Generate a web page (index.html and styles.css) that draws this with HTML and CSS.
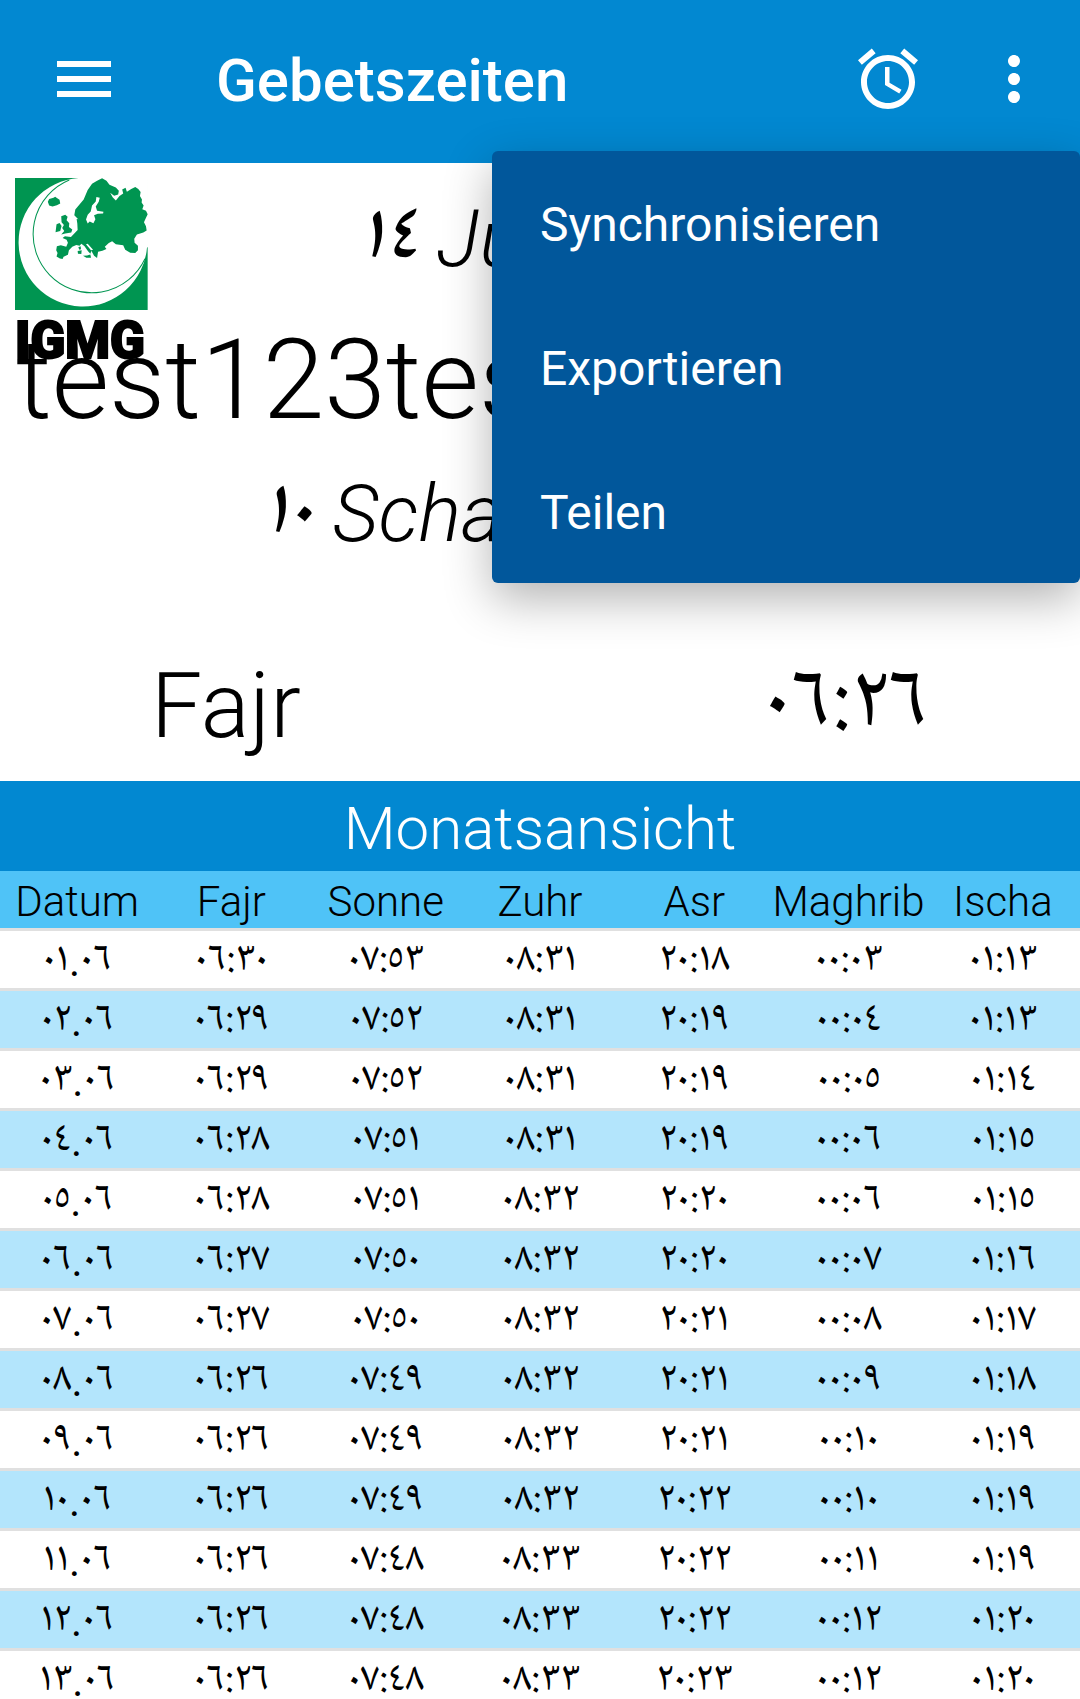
FILE: index.html
```html
<!DOCTYPE html>
<html lang="de">
<head>
<meta charset="utf-8">
<meta name="viewport" content="width=device-width, initial-scale=1">
<title>Gebetszeiten</title>
<link rel="stylesheet" href="styles.css">
</head>
<body>
<div class="app">
  <header class="toolbar">
    <button class="icon-button" type="button" aria-label="Navigation">
      <svg viewBox="0 0 24 24"><path d="M3 18h18v-2H3v2zm0-5h18v-2H3v2zm0-7v2h18V6H3z"/></svg>
    </button>
    <h1 class="toolbar-title">Gebetszeiten</h1>
    <button class="icon-button" type="button" aria-label="Wecker">
      <svg viewBox="0 0 24 24"><path d="M22 5.72l-4.6-3.86-1.29 1.53 4.6 3.86L22 5.72zM7.88 3.39L6.6 1.86 2 5.71l1.29 1.53 4.59-3.85zM12.5 8H11v6l4.75 2.85.75-1.23-4-2.37V8zM12 4c-4.97 0-9 4.03-9 9s4.02 9 9 9 9-4.03 9-9-4.03-9-9-9zm0 16c-3.87 0-7-3.13-7-7s3.13-7 7-7 7 3.13 7 7-3.13 7-7 7z"/></svg>
    </button>
    <button class="icon-button overflow" type="button" aria-label="Mehr" aria-expanded="true">
      <svg viewBox="0 0 24 24"><path d="M12 8c1.100 0 2-.9 2-2s-.9-2-2-2-2 .9-2 2 .9 2 2 2zm0 2c-1.100 0-2 .9-2 2s.9 2 2 2 2-.9 2-2-.9-2-2-2zm0 6c-1.100 0-2 .9-2 2s.9 2 2 2 2-.9 2-2-.9-2-2-2z"/></svg>
    </button>
    <div class="menu" role="menu">
      <button class="menu-item" type="button" role="menuitem">Synchronisieren</button>
      <button class="menu-item" type="button" role="menuitem">Exportieren</button>
      <button class="menu-item" type="button" role="menuitem">Teilen</button>
    </div>
  </header>

  <main class="content">
    <section class="today">
      <div class="logo">
        <svg class="logo-mark" viewBox="45 54 396 394" aria-hidden="true">
          <path class="green" d="M45 54H441V448H45z"/>
          <path class="white" d="M235 54A192 192 0 1 0 439 262L442 260V53z"/>
          <path class="ring" d="M207 60A175 175 0 1 0 433 295"/>
          <path class="green" d="M222 165L225 148L250 118L262 90L275 71L290 62L305 55L318 62L327 74L346 82L355 92L353 103L341 107L329 98L337 112L346 121L357 108L368 100L365 88L375 83L379 95L392 87L404 81L413 87L420 96L418 108L424 118L423 127L429 136L425 147L436 152L441 162L435 175L430 186L436 198L438 211L428 217L409 223L401 235L402 247L412 256L412 270L404 278L389 277L374 268L368 255L346 252L335 243L325 248L313 259L318 266L306 271L293 274L290 293L281 286L272 270L278 268L262 250L257 252L273 271L270 280L263 273L252 257L243 250L238 256L228 254L216 259L206 270L203 283L190 289L187 296L179 294L169 288L172 278L168 270L170 258L182 255L198 259L203 247L199 238L187 233L194 228L212 230L222 220L232 209L231 190L229 176L242 178L244 190L254 181L263 187L258 176L261 164L271 154L275 136L286 124L288 111L298 112L295 124L286 139L290 152L309 156L308 160L290 160L280 164L285 177L278 189L269 187L270 196L259 191L252 195L242 193L242 179L233 176z"/>
          <path class="white" d="M288 111L298 113L295 125L286 139L290 152L309 155L308 160L292 161L281 165L285 177L279 189L268 184L262 190L257 178L262 164L271 154L275 136L286 124z"/>
          <path class="green" d="M143 125L147 117L160 113L165 110L170 114L178 119L180 130L170 135L157 139L147 136"/>
          <path class="green" d="M183 168L195 164L202 170L199 180L207 189L206 200L216 208L213 217L195 220L183 223L192 212L186 203L191 194L184 186z"/>
          <path class="green" d="M169 192L178 188L184 197L180 212L166 216z"/>
          <path class="green" d="M234 261L241 258L242 267L237 268zM232 272L244 270L243 281L233 280zM248 286L260 285L270 282L272 292L258 292z"/>
        </svg>
        <span class="logo-name">IGMG</span>
      </div>
      <p class="date"><span class="num">١٤</span> Juni <span class="num">٢٠١٩</span></p>
      <p class="place">test123test123test123</p>
      <p class="date hijri"><span class="num">١٠</span> Schawwal <span class="num">١٤٤٠</span></p>
      <div class="next">
        <span class="next-name">Fajr</span>
        <time class="next-time">٠٦:٢٦</time>
      </div>
    </section>

    <h2 class="month-title">Monatsansicht</h2>
    <table class="times">
      <thead>
        <tr><th>Datum</th><th>Fajr</th><th>Sonne</th><th>Zuhr</th><th>Asr</th><th>Maghrib</th><th>Ischa</th></tr>
      </thead>
      <tbody>
        <tr><td>٠١<span class="dot">.</span>٠٦</td><td>٠٦:٣٠</td><td>٠٧:٥٣</td><td>٠٨:٣١</td><td>٢٠:١٨</td><td>٠٠:٠٣</td><td>٠١:١٣</td></tr>
        <tr><td>٠٢<span class="dot">.</span>٠٦</td><td>٠٦:٢٩</td><td>٠٧:٥٢</td><td>٠٨:٣١</td><td>٢٠:١٩</td><td>٠٠:٠٤</td><td>٠١:١٣</td></tr>
        <tr><td>٠٣<span class="dot">.</span>٠٦</td><td>٠٦:٢٩</td><td>٠٧:٥٢</td><td>٠٨:٣١</td><td>٢٠:١٩</td><td>٠٠:٠٥</td><td>٠١:١٤</td></tr>
        <tr><td>٠٤<span class="dot">.</span>٠٦</td><td>٠٦:٢٨</td><td>٠٧:٥١</td><td>٠٨:٣١</td><td>٢٠:١٩</td><td>٠٠:٠٦</td><td>٠١:١٥</td></tr>
        <tr><td>٠٥<span class="dot">.</span>٠٦</td><td>٠٦:٢٨</td><td>٠٧:٥١</td><td>٠٨:٣٢</td><td>٢٠:٢٠</td><td>٠٠:٠٦</td><td>٠١:١٥</td></tr>
        <tr><td>٠٦<span class="dot">.</span>٠٦</td><td>٠٦:٢٧</td><td>٠٧:٥٠</td><td>٠٨:٣٢</td><td>٢٠:٢٠</td><td>٠٠:٠٧</td><td>٠١:١٦</td></tr>
        <tr><td>٠٧<span class="dot">.</span>٠٦</td><td>٠٦:٢٧</td><td>٠٧:٥٠</td><td>٠٨:٣٢</td><td>٢٠:٢١</td><td>٠٠:٠٨</td><td>٠١:١٧</td></tr>
        <tr><td>٠٨<span class="dot">.</span>٠٦</td><td>٠٦:٢٦</td><td>٠٧:٤٩</td><td>٠٨:٣٢</td><td>٢٠:٢١</td><td>٠٠:٠٩</td><td>٠١:١٨</td></tr>
        <tr><td>٠٩<span class="dot">.</span>٠٦</td><td>٠٦:٢٦</td><td>٠٧:٤٩</td><td>٠٨:٣٢</td><td>٢٠:٢١</td><td>٠٠:١٠</td><td>٠١:١٩</td></tr>
        <tr><td>١٠<span class="dot">.</span>٠٦</td><td>٠٦:٢٦</td><td>٠٧:٤٩</td><td>٠٨:٣٢</td><td>٢٠:٢٢</td><td>٠٠:١٠</td><td>٠١:١٩</td></tr>
        <tr><td>١١<span class="dot">.</span>٠٦</td><td>٠٦:٢٦</td><td>٠٧:٤٨</td><td>٠٨:٣٣</td><td>٢٠:٢٢</td><td>٠٠:١١</td><td>٠١:١٩</td></tr>
        <tr><td>١٢<span class="dot">.</span>٠٦</td><td>٠٦:٢٦</td><td>٠٧:٤٨</td><td>٠٨:٣٣</td><td>٢٠:٢٢</td><td>٠٠:١٢</td><td>٠١:٢٠</td></tr>
        <tr><td>١٣<span class="dot">.</span>٠٦</td><td>٠٦:٢٦</td><td>٠٧:٤٨</td><td>٠٨:٣٣</td><td>٢٠:٢٣</td><td>٠٠:١٢</td><td>٠١:٢٠</td></tr>
      </tbody>
    </table>
  </main>
</div>
</body>
</html>
```
FILE: styles.css
```css
* {
  box-sizing: border-box;
}

body {
  margin: 0;
  background: #fff;
  color: #000;
  font-family: Roboto, "Noto Naskh Arabic", "DejaVu Sans", sans-serif;
}

h1, h2, p {
  margin: 0;
}

button {
  border: 0;
  padding: 0;
  background: none;
  color: inherit;
  font: inherit;
}

.app {
  display: flex;
  flex-direction: column;
  height: 100vh;
}

/* Toolbar */
.toolbar {
  position: relative;
  z-index: 1;
  flex: none;
  display: flex;
  align-items: center;
  padding: 43px 30px 48px 48px;
  background: #0288d1;
  color: #fff;
}

.icon-button {
  flex: none;
  width: 72px;
  height: 72px;
}

.icon-button svg {
  display: block;
  fill: currentColor;
}

.overflow {
  margin-left: 54px;
}

.toolbar-title {
  flex: 1;
  padding: 4px 0 0 96px;
  font-size: 60px;
  line-height: 68px;
  font-weight: 500;
}

.menu {
  position: absolute;
  top: 151px;
  right: 0;
  width: 588px;
  border-radius: 6px;
  background: #01579b;
  box-shadow: 0 16px 48px rgba(0, 0, 0, 0.3);
}

.menu-item {
  display: block;
  width: 100%;
  height: 144px;
  padding: 2px 48px 0;
  font-size: 48px;
  text-align: left;
}

/* Current day */
.content {
  flex: 1;
  min-height: 0;
  overflow: auto;
  scrollbar-width: none;
}

.today {
  position: relative;
  font-weight: 300;
  white-space: nowrap;
}

.logo {
  position: absolute;
  top: 15px;
  left: 15px;
  width: 132px;
}

.logo-mark {
  display: block;
  height: 132px;
}

.logo-name {
  display: block;
  font-size: 51px;
  line-height: 62px;
  font-weight: 900;
  -webkit-text-stroke: 2px #000;
}

.green {
  fill: #009551;
}

.white {
  fill: #fff;
}

.ring {
  fill: none;
  stroke: #009551;
  stroke-width: 3;
}

.date {
  font-size: 80px;
  line-height: 152px;
  font-style: italic;
  text-align: center;
}

.hijri {
  line-height: 138px;
}

/* Arabic-Indic digits ride a little above the Latin baseline */
.num {
  font-family: "Noto Naskh Arabic", "DejaVu Sans", sans-serif;
  font-variant-numeric: proportional-nums;
  font-weight: 500;
  line-height: 1;
  vertical-align: 9px;
}

.place {
  padding: 0 16px;
  overflow: hidden;
  font-size: 111px;
  line-height: 130px;
}

.next {
  display: grid;
  grid-template-columns: 452fr 160fr 468fr;
  padding-top: 48px;
  font-size: 91px;
  line-height: 150px;
  text-align: center;
}

.next-time {
  grid-column: 3;
  font-family: "Noto Naskh Arabic", "DejaVu Sans", sans-serif;
  font-variant-numeric: proportional-nums;
  font-weight: 400;
}

/* Month */
.month-title {
  padding-top: 6px;
  background: #0288d1;
  color: #fff;
  font-size: 60px;
  line-height: 84px;
  font-weight: 300;
  text-align: center;
}

.times {
  width: 100%;
  table-layout: fixed;
  border-spacing: 0;
  text-align: center;
}

.times th {
  padding: 4px 0 0;
  background: #4fc3f7;
  font-size: 42px;
  line-height: 53px;
  font-weight: 300;
}

.times td {
  padding: 4px 0 0;
  border-top: 3px solid #e0e0e0;
  font-family: "Noto Naskh Arabic", "DejaVu Sans", sans-serif;
  font-variant-numeric: proportional-nums;
  font-size: 42px;
  font-weight: 400;
  line-height: 53px;
}

.times .dot {
  font-family: Roboto, sans-serif;
  line-height: 1;
  vertical-align: -6px;
}

.times tbody tr:nth-child(even) {
  background: #b3e5fc;
}
```
